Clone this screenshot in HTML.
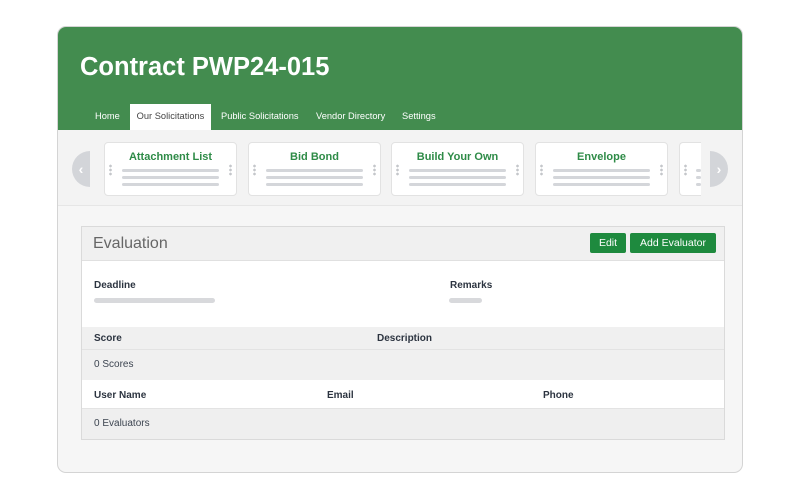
<!DOCTYPE html>
<html><head><style>
*{margin:0;padding:0;box-sizing:border-box}
body{width:800px;height:500px;background:#fff;font-family:"Liberation Sans",sans-serif;position:relative;overflow:hidden}
.a{position:absolute}
.card{position:absolute;left:58px;top:27px;width:684px;height:445px;box-shadow:0 0 0 1px #d4d4d4;border-radius:8px;background:#f6f6f6;overflow:hidden}
.hdr{position:absolute;left:0;top:0;width:100%;height:103px;background:#438c4f}
.title{position:absolute;left:22px;top:26px;color:#fff;font-size:25.5px;font-weight:bold}
.tab{position:absolute;top:77px;height:26px;line-height:24px;color:#fff;font-size:9.3px;white-space:nowrap}
.tab.act{background:#fff;color:#444;text-align:center}
.car{position:absolute;left:0;top:103px;width:100%;height:76px;background:#f3f3f3;border-bottom:1px solid #e6e6e6}
.c{position:absolute;top:12px;width:133px;height:54px;background:#fff;border:1px solid #e2e2e2;border-radius:4px;overflow:hidden}
.c b{display:block;text-align:center;color:#2e8b47;font-size:11px;margin-top:8px}
.ln{position:absolute;left:17px;right:17px;height:3px;background:#d4d6da;border-radius:2px}
.dt{position:absolute;top:21px;width:3px;height:12px;background:radial-gradient(circle,#c4c6ca 1.2px,transparent 1.5px) 0 0/3px 4px}
.pan{position:absolute;left:23px;top:199px;width:644px;height:214px;border:1px solid #dadada;background:#fff;overflow:hidden}
.lb{position:absolute;font-size:10px;font-weight:bold;color:#2c3440}
.tx{position:absolute;font-size:10px;color:#3c4450}
.btn{position:absolute;top:6px;height:20px;line-height:20px;background:#1e8a3e;color:#fff;font-size:10.5px;border-radius:2px;text-align:center}
</style></head><body>
<div class="card">
<div class="hdr">
<div class="title">Contract PWP24-015</div>
<div class="tab" style="left:37px">Home</div>
<div class="tab act" style="left:72px;width:81px">Our Solicitations</div>
<div class="tab" style="left:163px">Public Solicitations</div>
<div class="tab" style="left:258px">Vendor Directory</div>
<div class="tab" style="left:344px">Settings</div>
</div>
<div class="car">
<div class="a" style="left:14px;top:21px;width:18px;height:36px;background:#d3d5d9;border-radius:18px 0 0 18px;color:#fff;font-size:14px;line-height:36px;text-align:center;font-weight:bold">&#8249;</div>
<div class="c" style="left:46px"><b>Attachment List</b><div class="ln" style="top:26px"></div><div class="ln" style="top:33px"></div><div class="ln" style="top:40px"></div><div class="dt" style="left:4px"></div><div class="dt" style="right:4px"></div></div>
<div class="c" style="left:190px"><b>Bid Bond</b><div class="ln" style="top:26px"></div><div class="ln" style="top:33px"></div><div class="ln" style="top:40px"></div><div class="dt" style="left:4px"></div><div class="dt" style="right:4px"></div></div>
<div class="c" style="left:333px"><b>Build Your Own</b><div class="ln" style="top:26px"></div><div class="ln" style="top:33px"></div><div class="ln" style="top:40px"></div><div class="dt" style="left:4px"></div><div class="dt" style="right:4px"></div></div>
<div class="c" style="left:477px"><b>Envelope</b><div class="ln" style="top:26px"></div><div class="ln" style="top:33px"></div><div class="ln" style="top:40px"></div><div class="dt" style="left:4px"></div><div class="dt" style="right:4px"></div></div>
<div class="c" style="left:621px;width:22px;border-right:none;border-radius:4px 0 0 4px"><div class="dt" style="left:4px"></div><div class="ln" style="top:26px;left:16px;right:0"></div><div class="ln" style="top:33px;left:16px;right:0"></div><div class="ln" style="top:40px;left:16px;right:0"></div></div>
<div class="a" style="left:652px;top:21px;width:18px;height:36px;background:#d3d5d9;border-radius:0 18px 18px 0;color:#fff;font-size:14px;line-height:36px;text-align:center;font-weight:bold">&#8250;</div>
</div>
<div class="pan">
<div class="a" style="left:0;top:0;width:100%;height:34px;background:#f0f0f0;border-bottom:1px solid #e0e0e0"></div>
<div class="a" style="left:11px;top:8px;font-size:16px;color:#666">Evaluation</div>
<div class="btn" style="left:508px;width:36px">Edit</div>
<div class="btn" style="left:548px;width:86px">Add Evaluator</div>
<div class="lb" style="left:12px;top:53px">Deadline</div>
<div class="a" style="left:12px;top:71px;width:121px;height:5px;background:#d8d9dc;border-radius:3px"></div>
<div class="lb" style="left:368px;top:53px">Remarks</div>
<div class="a" style="left:367px;top:71px;width:33px;height:5px;background:#d8d9dc;border-radius:3px"></div>
<div class="a" style="left:0;top:100px;width:100%;height:53px;background:#f0f0f0"></div>
<div class="a" style="left:0;top:122px;width:100%;height:1px;background:#e3e3e3"></div>
<div class="lb" style="left:12px;top:106px">Score</div>
<div class="lb" style="left:295px;top:106px">Description</div>
<div class="tx" style="left:12px;top:132px">0 Scores</div>
<div class="lb" style="left:12px;top:163px">User Name</div>
<div class="lb" style="left:245px;top:163px">Email</div>
<div class="lb" style="left:461px;top:163px">Phone</div>
<div class="a" style="left:0;top:181px;width:100%;height:31px;background:#efefef;border-top:1px solid #e3e3e3"></div>
<div class="tx" style="left:12px;top:191px">0 Evaluators</div>
</div>
</div>
</body></html>
